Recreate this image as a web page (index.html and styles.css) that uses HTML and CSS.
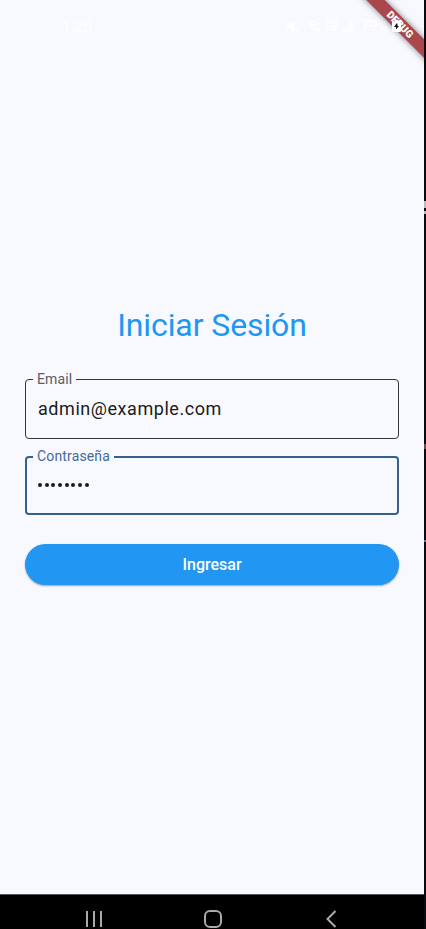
FILE: index.html
```html
<!DOCTYPE html>
<html lang="es">
<head>
<meta charset="utf-8">
<title>Iniciar Sesión</title>
<link rel="stylesheet" href="styles.css">
</head>
<body>
<div class="device">
  <main class="screen">
    <header class="status">
      <span class="clock">1:20</span>
      <div class="indicators">
        <svg class="mute" width="13" height="13" viewBox="0 0 13 13"><path d="M1 4.500h3L8 1v11L4 8.500H1z" fill="#fff"/><path d="M1 1l11 11" stroke="#fff" stroke-width="1.300"/></svg>
        <svg class="wifi" width="15" height="13" viewBox="0 0 15 13" fill="none" stroke="#fff" stroke-width="1.300"><path d="M1 4q6-5 12 0M3 6.500q4-3.500 8 0M5 9q2-2 4 0M10.500 12V8M13 7v4"/></svg>
        <div class="volte"><span>Vo))</span><span>LTE</span></div>
        <svg class="signal" width="10" height="11" viewBox="0 0 10 11" fill="#fff"><path d="M0 9h1.500v2H0zM2.700 6.500h1.500V11H2.700zM5.400 3.500h1.500V11H5.400zM8 0h1.500v11H8z"/></svg>
        <span class="percent">79%</span>
      </div>
    </header>
    <div class="debug"><span>DEBUG</span></div>
    <svg class="battery" width="9" height="12" viewBox="0 0 9 12"><path d="M2.500 0h4v1.500H8a1 1 0 0 1 1 1V11a1 1 0 0 1-1 1H1a1 1 0 0 1-1-1V2.500a1 1 0 0 1 1-1h1.500z" fill="#fff"/><path d="M4.500 3.500L2 7h2v2.500L7 6H5.500V3.500z" fill="#141414"/></svg>
    <form class="login">
      <h1>Iniciar Sesión</h1>
      <div class="field"><label>Email</label><span class="value">admin@example.com</span></div>
      <div class="field focused"><label>Contraseña</label><div class="dots"><i></i><i></i><i></i><i></i><i></i><i></i><i></i><i></i></div></div>
      <button type="button">Ingresar</button>
    </form>
  </main>
  <nav class="navbar">
    <svg width="18" height="18" viewBox="0 0 18 18"><path d="M2 1v16M9 1v16M16 1v16" stroke="#aaa" stroke-width="2"/></svg>
    <svg width="18" height="18" viewBox="0 0 18 18"><rect x="1" y="1" width="16" height="16" rx="5" fill="none" stroke="#aaa" stroke-width="2"/></svg>
    <svg width="18" height="18" viewBox="0 0 18 18"><path d="M13.500 1L5.500 9l8 8" fill="none" stroke="#aaa" stroke-width="2"/></svg>
  </nav>
</div>
<aside class="edge"><i class="mark light"></i><i class="mark light low"></i><i class="mark red"></i><i class="mark blue"></i></aside>
</body>
</html>
```
FILE: styles.css
```css
* { box-sizing: border-box; }
body { margin: 0; display: flex; height: 929px; overflow: hidden; background: #000; font-family: Roboto, sans-serif; }
.device { width: 424px; height: 929px; display: flex; flex-direction: column; }
.screen { position: relative; height: 894px; background: #f8f9ff; overflow: hidden; }
.status { height: 52px; padding: 0 33px 0 62px; display: flex; justify-content: space-between; align-items: center; color: #fff; }
.clock { font-size: 16px; letter-spacing: -0.2px; opacity: .9; }
.indicators { display: flex; align-items: center; }
.wifi { margin-left: 7px; }
.volte { margin-left: 5px; width: 13px; display: flex; flex-direction: column; font-size: 6.500px; font-weight: 700; line-height: 7px; letter-spacing: -.2px; }
.volte span { height: 7px; }
.signal { margin-left: 4px; }
.percent { margin-left: 8px; font-size: 15px; width: 30px; letter-spacing: -.3px; }
.debug { position: absolute; left: 349.500px; top: 18px; width: 100px; height: 13px; background: #a9474c; box-shadow: 0 0 6px rgba(0,0,0,.5); transform: rotate(45deg); text-align: center; color: #fff; font-size: 10.300px; font-weight: 900; line-height: 13px; }
.battery { position: absolute; left: 392px; top: 20px; }
.login { margin: 0; padding: 253px 25px 0; display: flex; flex-direction: column; }
h1 { margin: 0 0 33px; height: 41px; line-height: 41px; text-align: center; font-size: 32px; letter-spacing: -.1px; font-weight: 400; color: #2196f3; white-space: nowrap; }
.field { position: relative; height: 60px; border: 1px solid #34353b; border-radius: 4px; padding: 0 12px; display: flex; align-items: center; color: #191c20; font-size: 18px; letter-spacing: .55px; }
.value { margin-top: -1px; }
.field label { position: absolute; left: 7px; top: -9px; padding: 0 4px; line-height: 17px; font-size: 14px; letter-spacing: .15px; background: #f8f9ff; color: #5a5d64; }
.focused { margin-top: 17px; height: 59px; border: 2px solid #36618e; padding: 0 11px; }
.focused label { left: 6px; top: -10px; color: #466a94; }
.dots { display: flex; gap: 2.700px; margin-top: -2px; }
.dots i { width: 4px; height: 4px; border-radius: 50%; background: #191c20; }
button { margin: 29px 0 0; height: 41px; border: 0; border-radius: 21px; background: #2196f3; color: #fff; font: 500 16px/41px Roboto, sans-serif; padding: 0; box-shadow: 0 1px 2px rgba(0,0,0,.35); }
.navbar { height: 35px; padding: 15px 84px 0 85px; display: flex; justify-content: space-between; align-items: flex-start; background: #000; border-top: 1px solid #55565a; }
.edge { position: relative; width: 2px; height: 929px; background: #080b0f; }
.mark { position: absolute; left: 0; width: 2px; height: 7px; top: 201px; }
.light { background: #bbb; }
.low { top: 211px; height: 3px; }
.red { top: 444px; height: 5px; background: #6b4745; }
.blue { top: 540px; height: 2px; background: #5278a0; }
```
